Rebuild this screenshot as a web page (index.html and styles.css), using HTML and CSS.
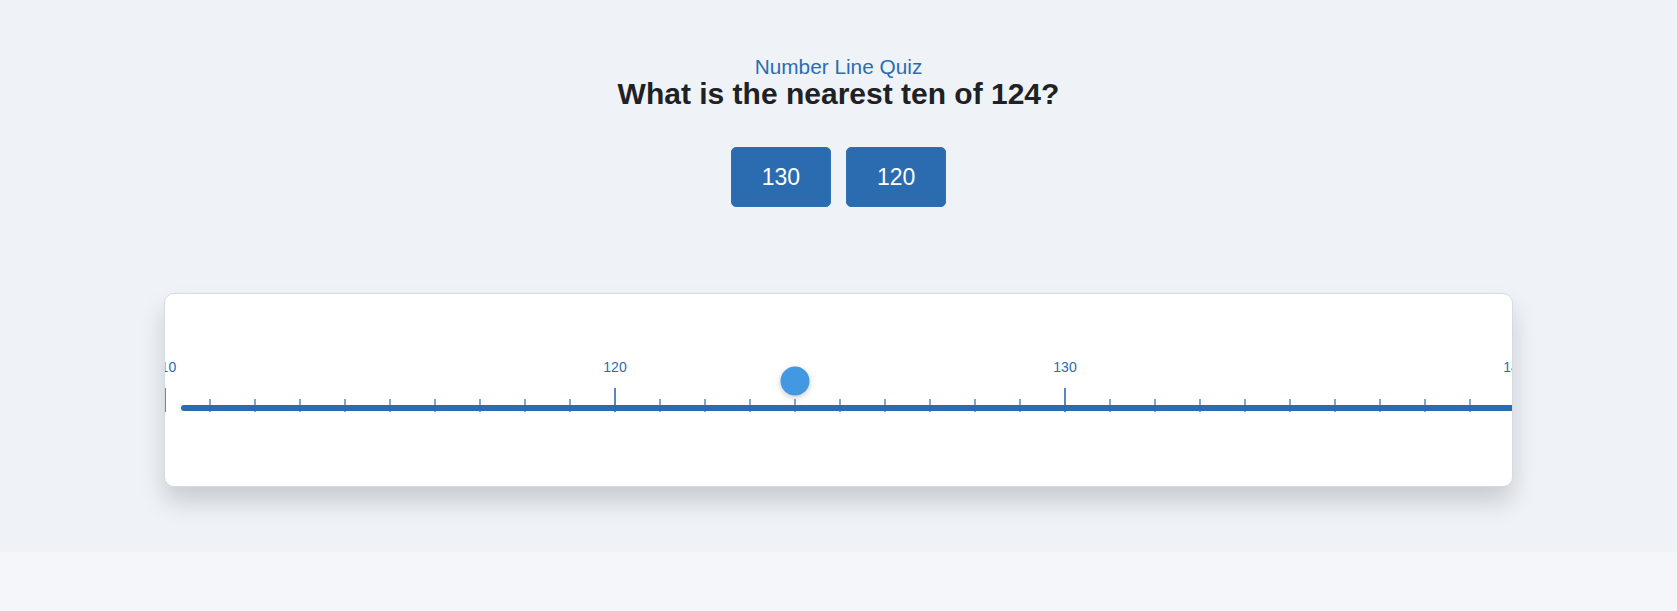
FILE: index.html
```html
<!DOCTYPE html>
<html>
<head lang="en">
    <meta charset="UTF-8">
    <title>Number Line Quiz</title>
    <link rel="stylesheet" href="styles.css">
</head>
<body>
    <div class="quiz">
        <div class="header">
            <p class="subtitle">Number Line Quiz</p>
            <h1 class="question">What is the nearest ten of 124?</h1>
            <div class="answers">
                <button class="btn">130</button>
                <button class="btn">120</button>
            </div>
        </div>

        <div class="line-card">
            <svg class="number-line" width="1500" height="192" viewBox="0 0 1500 192">
                <line class="axis" x1="19" y1="114" x2="1500" y2="114" />
                <g id="ticks"></g>
                <g id="labels"></g>
                <circle class="marker" cx="630" cy="87" r="14.5" />
            </svg>
        </div>
    </div>

    <script type="application/javascript">
        var NS = 'http://www.w3.org/2000/svg';
        var unit = 45;
        var start = 110;

        var draw_ticks = function(){
            var ticks = document.getElementById('ticks');
            var labels = document.getElementById('labels');
            for(var n = start; n <= 143; n++){
                var x = (n - start) * unit;
                var major = (n % 10 === 0);
                var tick = document.createElementNS(NS, 'line');
                tick.setAttribute('x1', x);
                tick.setAttribute('x2', x);
                tick.setAttribute('y1', major ? 94 : 105);
                tick.setAttribute('y2', 118);
                tick.setAttribute('class', major ? 'tick tick-major' : 'tick');
                ticks.appendChild(tick);
                if(major){
                    var label = document.createElementNS(NS, 'text');
                    label.setAttribute('x', x);
                    label.setAttribute('y', 78);
                    label.setAttribute('class', 'label');
                    label.textContent = n;
                    labels.appendChild(label);
                }
            }
        };

        draw_ticks();
    </script>
</body>
</html>
```

FILE: styles.css
```css
body{
    margin: 0;
    padding: 0;
    background-color: #f4f6f9;
    font-family: "Liberation Sans", Arial, sans-serif;
}
.quiz{
    background-color: #eff3f8;
    padding: 55px 0 65px;
}
.header{
    text-align: center;
}
.subtitle{
    margin: 0;
    font-size: 20.8px;
    line-height: 24px;
    color: #2b6cb0;
}
.question{
    margin: 0;
    font-size: 30px;
    line-height: 29px;
    font-weight: bold;
    color: #202124;
}
.answers{
    display: flex;
    justify-content: center;
    gap: 15px;
    margin-top: 39px;
}
.btn{
    padding: 15px 30px;
    border: 1px solid #2f6fb5;
    border-radius: 5px;
    background-color: #2b6cb0;
    color: #fff;
    font-family: "Liberation Sans", Arial, sans-serif;
    font-size: 23px;
    line-height: 28px;
}
.line-card{
    margin: 86px 164px 0;
    height: 192px;
    overflow: hidden;
    background-color: #fff;
    border: 1px solid #d3dbe5;
    border-radius: 10px;
    box-shadow: 0 15px 25px rgba(0, 0, 0, 0.16);
}
.number-line{
    display: block;
}
.axis{
    stroke: #2b6cb0;
    stroke-width: 6;
    stroke-linecap: round;
}
.tick{
    stroke: #2b6cb0;
    stroke-width: 1.2;
}
.tick-major{
    stroke-width: 1.6;
}
.label{
    fill: #2b6cb0;
    font-family: "Liberation Sans", Arial, sans-serif;
    font-size: 14px;
    text-anchor: middle;
}
.marker{
    fill: #4299e1;
    filter: drop-shadow(0 2px 3px rgba(0, 0, 0, 0.2));
}
```
